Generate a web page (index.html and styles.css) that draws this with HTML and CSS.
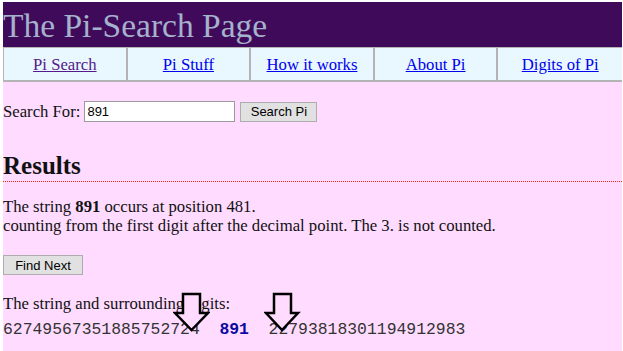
FILE: index.html
```html
<!DOCTYPE html>
<html lang="en">
<head>
    <meta charset="UTF-8">
    <title>The Pi-Search Page</title>
    <link rel="stylesheet" href="styles.css">
</head>
<body>
    <!-- 页头 -->
    <div class="header">
        <h1>The Pi-Search Page</h1>
    </div>

    <!-- 导航 -->
    <div class="nav">
        <a class="visited" href="#">Pi Search</a>
        <a href="#">Pi Stuff</a>
        <a href="#">How it works</a>
        <a href="#">About Pi</a>
        <a href="#">Digits of Pi</a>
    </div>

    <!-- 搜索表单 -->
    <form class="search-form">
        <label for="query">Search For:</label>
        <input id="query" class="text-input" type="text" value="891">
        <button type="button" class="btn btn-search">Search Pi</button>
    </form>

    <h2 class="results-title">Results</h2>

    <p class="result-text">The string <b>891</b> occurs at position 481.<br>
    counting from the first digit after the decimal point. The 3. is not counted.</p>

    <button type="button" class="btn btn-next">Find Next</button>

    <div class="digits-block">
        <p class="digits-label">The string and surrounding digits:</p>
        <div class="digits">62749567351885752724&nbsp;&nbsp;<b>891</b>&nbsp;&nbsp;22793818301194912983</div>

        <!-- 箭头标记 -->
        <svg class="arrow arrow-left" width="37" height="41" viewBox="0 0 37 41">
            <path d="M10 2 H27 V21 H35 L18.5 38 L2 21 H10 Z"/>
        </svg>
        <svg class="arrow arrow-right" width="37" height="41" viewBox="0 0 37 41">
            <path d="M10 2 H27 V21 H34 L18 38 L2 21 H10 Z"/>
        </svg>
    </div>
</body>
</html>
```

FILE: styles.css
```css
/* 基础样式 */
html {
    background-color: #fff;
}

body {
    margin: 2px 1px 0 3px;
    min-height: calc(100vh - 2px);
    background-color: #ffdcff;
    font-family: "Liberation Serif", "Times New Roman", serif;
    font-size: 16.7px;
    line-height: 19px;
    color: #111;
}

/* 页头 */
.header {
    background-color: #400a5b;
    height: 45px;
}

.header h1 {
    margin: 0;
    padding-top: 2px;
    font-size: 33.5px;
    font-weight: normal;
    line-height: 43px;
    color: #a4b2cc;
}

/* 导航 */
.nav {
    display: grid;
    grid-template-columns: repeat(5, 1fr);
    background-color: #e9f7ff;
    border-left: 1px solid #b4b4b4;
    border-bottom: 2px solid #b4b4b4;
    border-top: 1px solid #b4b4b4;
    height: 32px;
}

.nav a {
    display: flex;
    align-items: center;
    justify-content: center;
    color: #0000ee;
    border-right: 2px solid #b4b4b4;
}

.nav a:last-child {
    border-right: none;
}

.nav a.visited {
    color: #551a8b;
}

/* 搜索表单 */
.search-form {
    display: flex;
    align-items: center;
    margin: 19px 0 0;
    height: 21px;
}

.search-form label {
    margin-right: 4px;
}

.text-input {
    box-sizing: border-box;
    width: 151px;
    height: 21px;
    margin: 0 5px 0 0;
    padding: 1px 2px;
    border: 1px solid #9a9a9a;
    background: #fff;
    font-family: "Liberation Sans", Arial, sans-serif;
    font-size: 13px;
    color: #000;
}

.btn {
    box-sizing: border-box;
    height: 20px;
    padding: 0;
    background-color: #e1e1e1;
    border: 1px solid #adadad;
    font-family: "Liberation Sans", Arial, sans-serif;
    font-size: 13px;
    color: #000;
    white-space: nowrap;
}

.btn-search {
    width: 77px;
}

/* 结果 */
.results-title {
    margin: 30px 0 0;
    padding-bottom: 2px;
    font-size: 25px;
    line-height: 28px;
    /* 红色点线 */
    background-image: linear-gradient(to right, #ff2020 50%, transparent 50%);
    background-size: 2px 1px;
    background-repeat: repeat-x;
    background-position: left bottom;
}

.result-text {
    margin: 15px 0 0;
}

.btn-next {
    display: block;
    width: 80px;
    margin-top: 20px;
}

.digits-block {
    position: relative;
    margin-top: 19px;
}

.digits-label {
    margin: 0;
}

.digits {
    margin-top: 7px;
    font-family: "Liberation Mono", "Courier New", monospace;
    font-size: 16.4px;
    line-height: 19px;
    color: #333;
    white-space: nowrap;
}

.digits b {
    color: #0a0aa0;
}

/* 箭头 */
.arrow {
    position: absolute;
    top: -2px;
}

.arrow path {
    fill: #ffdcff;
    stroke: #000;
    stroke-width: 2.5;
    stroke-linejoin: miter;
}

.arrow-left {
    left: 170px;
}

.arrow-right {
    left: 261px;
}
```
